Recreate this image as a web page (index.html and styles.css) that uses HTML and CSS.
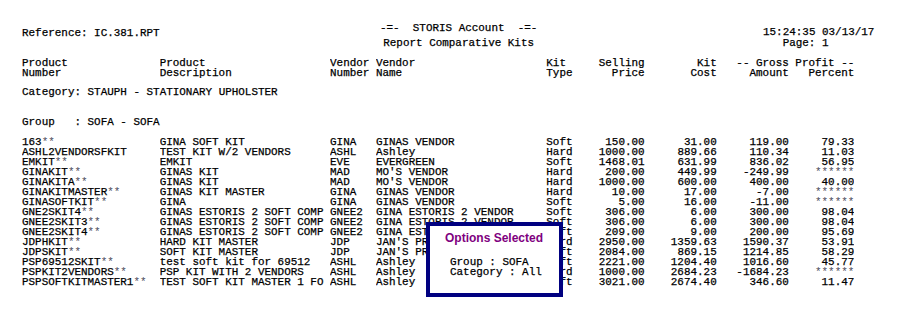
FILE: index.html
```html
<!DOCTYPE html>
<html>
<head>
<meta charset="utf-8">
<link rel="stylesheet" href="styles.css">
</head>
<body>
<div class="report">
  <header class="rpt-head">
    <div class="head-left txt">Reference: IC.381.RPT</div>
    <div class="head-center">
      <div class="txt">-=-  STORIS Account  -=-</div>
      <div class="txt">Report Comparative Kits</div>
    </div>
    <div class="head-right">
      <div class="stamp txt">15:24:35 03/13/17</div>
      <div class="page txt">Page: 1</div>
    </div>
  </header>

  <div class="grid cols">
    <div>Product</div><div>Product</div><div>Vendor</div><div>Vendor</div><div>Kit</div><div class="num">Selling</div><div class="num">Kit</div><div class="num span2">-- Gross Profit --</div>
    <div>Number</div><div>Description</div><div>Number</div><div>Name</div><div>Type</div><div class="num">Price</div><div class="num">Cost</div><div class="num">Amount</div><div class="num">Percent</div>
  </div>

  <div class="category txt">Category: STAUPH - STATIONARY UPHOLSTER</div>
  <div class="group txt">Group   : SOFA - SOFA</div>

  <div class="grid rows">
    <div>163<span class="ast">**</span></div><div>GINA SOFT KIT</div><div>GINA</div><div>GINAS VENDOR</div><div>Soft</div><div class="num">150.00</div><div class="num">31.00</div><div class="num">119.00</div><div class="num">79.33</div>
    <div>ASHL2VENDORSFKIT</div><div>TEST KIT W/2 VENDORS</div><div>ASHL</div><div>Ashley</div><div>Hard</div><div class="num">1000.00</div><div class="num">889.66</div><div class="num">110.34</div><div class="num">11.03</div>
    <div>EMKIT<span class="ast">**</span></div><div>EMKIT</div><div>EVE</div><div>EVERGREEN</div><div>Soft</div><div class="num">1468.01</div><div class="num">631.99</div><div class="num">836.02</div><div class="num">56.95</div>
    <div>GINAKIT<span class="ast">**</span></div><div>GINAS KIT</div><div>MAD</div><div>MO'S VENDOR</div><div>Hard</div><div class="num">200.00</div><div class="num">449.99</div><div class="num">-249.99</div><div class="num ast">******</div>
    <div>GINAKITA<span class="ast">**</span></div><div>GINAS KIT</div><div>MAD</div><div>MO'S VENDOR</div><div>Hard</div><div class="num">1000.00</div><div class="num">600.00</div><div class="num">400.00</div><div class="num">40.00</div>
    <div>GINAKITMASTER<span class="ast">**</span></div><div>GINAS KIT MASTER</div><div>GINA</div><div>GINAS VENDOR</div><div>Hard</div><div class="num">10.00</div><div class="num">17.00</div><div class="num">-7.00</div><div class="num ast">******</div>
    <div>GINASOFTKIT<span class="ast">**</span></div><div>GINA</div><div>GINA</div><div>GINAS VENDOR</div><div>Soft</div><div class="num">5.00</div><div class="num">16.00</div><div class="num">-11.00</div><div class="num ast">******</div>
    <div>GNE2SKIT4<span class="ast">**</span></div><div>GINAS ESTORIS 2 SOFT COMP</div><div>GNEE2</div><div>GINA ESTORIS 2 VENDOR</div><div>Soft</div><div class="num">306.00</div><div class="num">6.00</div><div class="num">300.00</div><div class="num">98.04</div>
    <div>GNEE2SKIT3<span class="ast">**</span></div><div>GINAS ESTORIS 2 SOFT COMP</div><div>GNEE2</div><div>GINA ESTORIS 2 VENDOR</div><div>Soft</div><div class="num">306.00</div><div class="num">6.00</div><div class="num">300.00</div><div class="num">98.04</div>
    <div>GNEE2SKIT4<span class="ast">**</span></div><div>GINAS ESTORIS 2 SOFT COMP</div><div>GNEE2</div><div>GINA ESTORIS 2 VENDOR</div><div>Soft</div><div class="num">209.00</div><div class="num">9.00</div><div class="num">200.00</div><div class="num">95.69</div>
    <div>JDPHKIT<span class="ast">**</span></div><div>HARD KIT MASTER</div><div>JDP</div><div>JAN'S PRODUCTS</div><div>Hard</div><div class="num">2950.00</div><div class="num">1359.63</div><div class="num">1590.37</div><div class="num">53.91</div>
    <div>JDPSKIT<span class="ast">**</span></div><div>SOFT KIT MASTER</div><div>JDP</div><div>JAN'S PRODUCTS</div><div>Soft</div><div class="num">2084.00</div><div class="num">869.15</div><div class="num">1214.85</div><div class="num">58.29</div>
    <div>PSP69512SKIT<span class="ast">**</span></div><div>test soft kit for 69512</div><div>ASHL</div><div>Ashley</div><div>Soft</div><div class="num">2221.00</div><div class="num">1204.40</div><div class="num">1016.60</div><div class="num">45.77</div>
    <div>PSPKIT2VENDORS<span class="ast">**</span></div><div>PSP KIT WITH 2 VENDORS</div><div>ASHL</div><div>Ashley</div><div>Hard</div><div class="num">1000.00</div><div class="num">2684.23</div><div class="num">-1684.23</div><div class="num ast">******</div>
    <div>PSPSOFTKITMASTER1<span class="ast">**</span></div><div>TEST SOFT KIT MASTER 1 FO</div><div>ASHL</div><div>Ashley</div><div>Soft</div><div class="num">3021.00</div><div class="num">2674.40</div><div class="num">346.60</div><div class="num">11.47</div>
  </div>
</div>

<div class="options">
  <div class="options-title">Options Selected</div>
  <div class="options-body">
    <div class="txt">Group : SOFA</div>
    <div class="txt">Category : All</div>
  </div>
</div>
</body>
</html>
```

FILE: styles.css
```css
html, body {
  margin: 0;
  padding: 0;
  background: #ffffff;
}

body {
  width: 904px;
  height: 322px;
  overflow: hidden;
  position: relative;
  font-family: "Liberation Mono", "DejaVu Sans Mono", monospace;
  font-size: 10.93px;
  line-height: 10px;
  color: #000000;
  -webkit-text-stroke: 0.25px #000000;
}

.txt,
.grid > div {
  white-space: pre;
}

.report {
  padding: 23px 0 0 22px;
}

.rpt-head {
  display: grid;
  grid-template-columns: 358px 383px auto;
  align-items: start;
}

.head-left {
  margin-top: 5px;
}

.head-center {
  width: 24ch;
  text-align: center;
  display: flex;
  flex-direction: column;
  gap: 4.5px;
}

.head-right {
  margin-top: 5px;
  display: flex;
  flex-direction: column;
}

.head-right .stamp {
  line-height: 9.5px;
}

.head-right .page {
  padding-left: 3ch;
}

.grid {
  display: grid;
  grid-template-columns: 21ch 26ch 7ch 26ch 4ch 11ch 11ch 11ch 10ch;
}

.grid > div {
  overflow: hidden;
}

.num {
  text-align: right;
}

.span2 {
  grid-column: span 2;
}

.cols {
  margin-top: 10.5px;
}

.category {
  margin-top: 9px;
}

.group {
  margin-top: 20px;
}

.rows {
  margin-top: 10px;
}

.ast {
  color: #4a4a5a;
  -webkit-text-stroke: 0;
}

.options {
  position: absolute;
  left: 426px;
  top: 222px;
  width: 137px;
  height: 75px;
  box-sizing: border-box;
  border: 4px solid #000080;
  background: #ffffff;
}

.options-title {
  margin-top: 5px;
  padding-left: 15px;
  font-family: "Liberation Sans", Arial, sans-serif;
  font-weight: bold;
  font-size: 12px;
  line-height: 14px;
  color: #800080;
  white-space: nowrap;
  -webkit-text-stroke: 0;
}

.options-body {
  margin-top: 12px;
  padding-left: 20px;
}
```
